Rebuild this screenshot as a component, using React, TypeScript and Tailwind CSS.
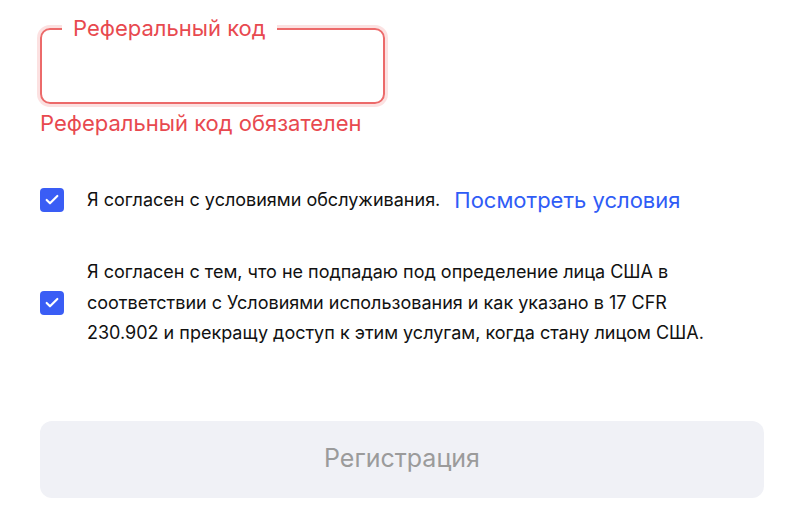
import { Check } from 'lucide-react';

function CheckBox() {
  return (
    <span className="flex h-[24px] w-[24px] shrink-0 items-center justify-center rounded-[4px] bg-[#3a5df5]">
      <Check className="h-[16px] w-[16px] text-white" strokeWidth={3.2} />
    </span>
  );
}

export default function App() {
  return (
    <div
      className="h-[515px] w-[800px] overflow-hidden bg-white pl-[40px] pr-[36px] pt-[28px]"
      style={{ fontFamily: 'Inter, "Noto Sans", sans-serif' }}
    >
      <div className="relative h-[76px] w-[345px] rounded-[10px] border-2 border-[#ec6a6a] shadow-[0_0_0_3px_rgba(239,90,90,0.18)]">
        <span className="absolute -top-[16px] left-[20px] bg-white px-[11px] text-[22px] leading-[28px] text-[#e8494f]">
          Реферальный код
        </span>
      </div>
      <div className="mt-[5px] text-[22px] leading-[28px] text-[#e8494f]">Реферальный код обязателен</div>

      <div className="mt-[49px] flex items-center gap-[23px]">
        <CheckBox />
        <div className="flex items-center gap-[14px]">
          <span className="text-[18px] leading-[24px] text-[#111]">Я согласен с условиями обслуживания.</span>
          <span className="text-[22px] leading-[28px] text-[#2f5cf6]">Посмотреть условия</span>
        </div>
      </div>

      <div className="mt-[43px] flex items-center gap-[23px]">
        <CheckBox />
        <p className="w-[630px] text-[18px] leading-[30.5px] text-[#111]">
          Я согласен с тем, что не подпадаю под определение лица США в соответствии с Условиями использования и как
          указано в 17 CFR 230.902 и прекращу доступ к этим услугам, когда стану лицом США.
        </p>
      </div>

      <button className="mt-[72px] flex h-[77px] w-[724px] items-center justify-center rounded-[12px] bg-[#f0f1f6] text-[25px] text-[#9b9b9b]">
        Регистрация
      </button>
    </div>
  );
}
